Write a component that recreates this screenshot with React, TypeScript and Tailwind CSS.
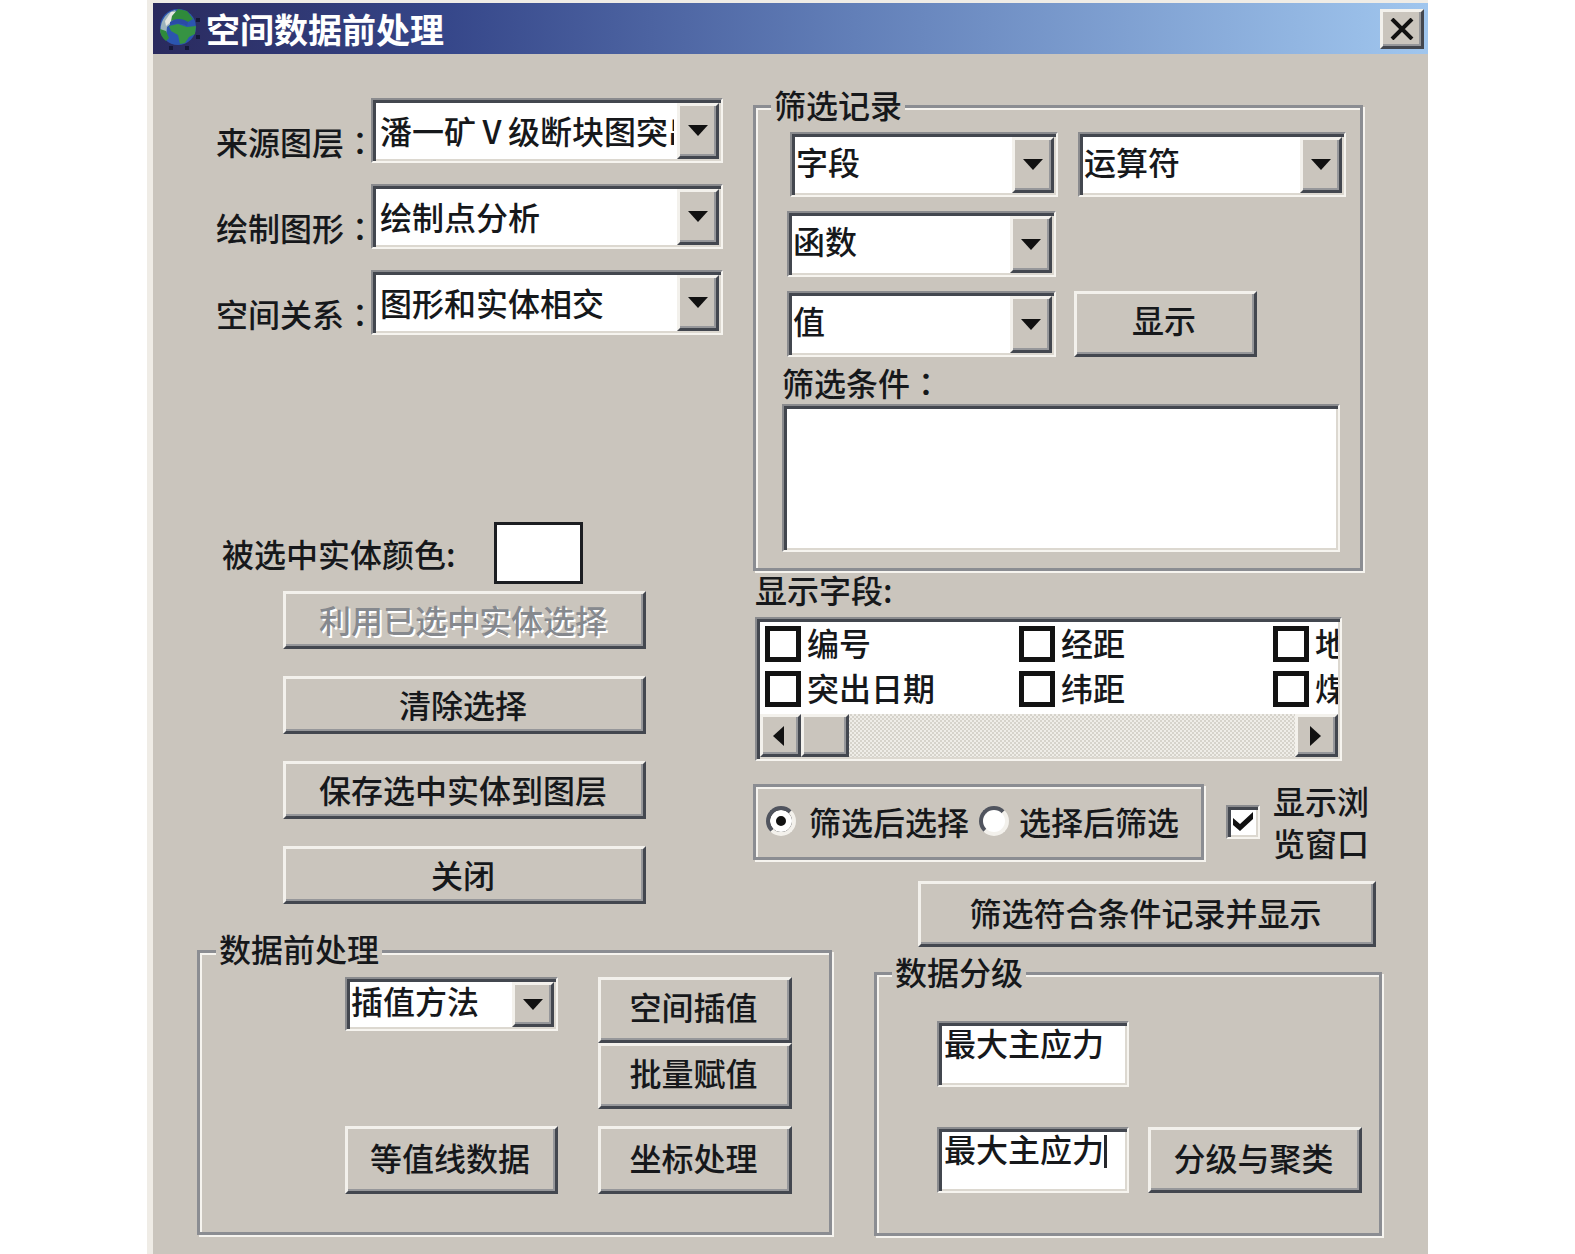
import React from "react";

const sunken =
  "border-2 border-t-[#8a8b8e] border-l-[#8a8b8e] border-r-[#f6f4ef] border-b-[#f6f4ef] shadow-[inset_3px_3px_0_#43474f,inset_-2px_-2px_0_#dcd8d0]";

const raised =
  "border-[3px] border-t-[#f3f1ec] border-l-[#f3f1ec] border-r-[#43474f] border-b-[#43474f] bg-[#cac5bd] shadow-[inset_-2px_-2px_0_#96979a]";

const etched =
  "border-[3px] border-[#8b8d92] shadow-[inset_2px_2px_0_#f6f4ef,2px_2px_0_#f6f4ef]";

type ButtonProps = {
  children?: React.ReactNode;
  className?: string;
  disabled?: boolean;
  label?: string;
};

const Button = ({ children, className = "", disabled, label }: ButtonProps) => (
  <button
    type="button"
    disabled={disabled}
    aria-label={label}
    className={`${raised} flex items-center justify-center pr-[3px] whitespace-nowrap disabled:text-[#86898e] disabled:[text-shadow:2px_2px_0_#fff] ${className}`}
  >
    {children}
  </button>
);

const Arrow = ({ d }: { d: string }) => (
  <svg width="20" height="20" viewBox="0 0 20 20" fill="#111" aria-hidden="true">
    <path d={d} />
  </svg>
);

type ComboProps = {
  id: string;
  value: string;
  label?: string;
  className?: string;
  inset?: string;
};

const Combo = ({ id, value, label, className = "", inset = "pl-px pb-[8px]" }: ComboProps) => (
  <div className={`${sunken} flex shrink-0 bg-white ${className}`}>
    <select
      id={id}
      aria-label={label}
      className={`mr-[3px] ml-[3px] min-w-0 flex-1 appearance-none overflow-hidden bg-transparent leading-[40px] outline-none ${inset}`}
    >
      <option>{value}</option>
    </select>
    <span
      className={`${raised} mt-[3px] mr-[2px] mb-[2px] flex w-[42px] shrink-0 items-center justify-center`}
    >
      <Arrow d="M0 4h20L10 15z" />
    </span>
  </div>
);

const WideColon = () => <span className="font-['Noto_Sans_CJK_TC']">：</span>;

const sources = [
  { id: "layer", label: "来源图层", value: "潘一矿Ⅴ级断块图突出" },
  { id: "shape", label: "绘制图形", value: "绘制点分析" },
  { id: "relation", label: "空间关系", value: "图形和实体相交" },
];

const fields = [
  ["编号", "经距", "地"],
  ["突出日期", "纬距", "煤"],
];

const Globe = () => (
  <svg width="42" height="42" viewBox="0 0 42 42" aria-hidden="true">
    <circle cx="20" cy="19" r="18" fill="#2b55b0" />
    <path d="M3 26C1 16 6 5 17 2l3 4-5 8-6 5-1 9z" fill="#9db3bd" />
    <path d="M7 13l6-9 5 0-4 9-6 5z" fill="#e4e6e0" />
    <path d="M14 8l6-7 9 2 6 8-5 3-9-3-8 2z" fill="#2f8a3b" />
    <path d="M11 18l9-2 9 3 9-1-1 8-6 3-4 6-5 1-2-9-7-4z" fill="#369343" />
    <path d="M2 21l6 2 3 7-3 3c-4-3-6-7-6-12z" fill="#2f8a3b" />
    <path d="M12 14c5-4 13-4 18 0l-1 4c-5-3-11-3-17-1z" fill="#2b4ba6" />
    <path d="M38 10h4v4h-4zM38 27h4v4h-4zM11 38h4v4h-4zM27 38h4v4h-4z" fill="#15183a" />
  </svg>
);

const TitleBar = () => (
  <header className="flex h-[51px] items-center bg-[linear-gradient(to_right,#2a2a5e,#36478a_23%,#627fb8_55%,#a0c6ee)] pr-1 pl-[5px]">
    <Globe />
    <h1 className="ml-[6px] flex-1 text-[34px] font-bold text-white">空间数据前处理</h1>
    <button
      type="button"
      aria-label="关闭窗口"
      className={`${raised} flex h-[40px] w-[44px] items-center justify-center`}
    >
      <svg width="24" height="22" viewBox="0 0 24 22" stroke="#111" strokeWidth="4" aria-hidden="true">
        <path d="M2 1l20 20M22 1L2 21" />
      </svg>
    </button>
  </header>
);

const Selection = () => (
  <>
    <div className="flex flex-col gap-[21px] pr-[30px] pl-[63px]">
      {sources.map((s) => (
        <div key={s.id} className="flex">
          <label htmlFor={s.id} className="w-[155px] shrink-0 pt-[27px] whitespace-nowrap">
            {s.label}
            <WideColon />
          </label>
          <Combo
            id={s.id}
            value={s.value}
            inset="pl-1 pb-px"
            className="h-[65px] min-w-0 flex-1"
          />
        </div>
      ))}
    </div>

    <div className="mt-[187px] flex items-center pl-[69px]">
      <label htmlFor="color" className="w-[272px]">
        被选中实体颜色:
      </label>
      <button
        type="button"
        id="color"
        className="h-[62px] w-[89px] border-[3px] border-[#1c1e22] bg-white"
      />
    </div>

    <div className="mt-[7px] flex flex-col gap-[27px] pr-[107px] pl-[130px]">
      <Button disabled className="h-[58px] pb-[3px]">
        利用已选中实体选择
      </Button>
      <Button className="h-[58px] pb-[3px]">清除选择</Button>
      <Button className="h-[58px] pb-[3px]">保存选中实体到图层</Button>
      <Button className="h-[58px] pb-[3px]">关闭</Button>
    </div>
  </>
);

const Preprocess = () => (
  <fieldset className={`${etched} mt-[28px] -mr-[79px] ml-[44px] h-[303px] pr-[37px] pl-[145px]`}>
    <legend className="-ml-[129px] bg-[#cac5bd] px-[3px] pb-[6px]">数据前处理</legend>
    <div className="mt-[7px] flex justify-between">
      <div className="flex w-[213px] flex-col justify-between">
        <Combo id="method" label="插值方法" value="插值方法" className="h-[54px]" />
        <Button className="h-[68px] pb-[7px]">等值线数据</Button>
      </div>
      <div className="flex w-[194px] flex-col">
        <Button className="h-[66px] pb-[8px]">空间插值</Button>
        <Button className="h-[66px] pb-[8px]">批量赋值</Button>
        <Button className="mt-[17px] h-[68px] pb-[7px]">坐标处理</Button>
      </div>
    </div>
  </fieldset>
);

const Filter = () => (
  <fieldset className={`${etched} mr-[65px] h-[483px] pr-[14px] pl-[26px]`}>
    <legend className="-ml-[11px] bg-[#cac5bd] px-[3px] pb-1">筛选记录</legend>
    <div className="mt-[8px] ml-[8px] flex justify-between">
      <Combo id="field" label="字段" value="字段" className="h-[65px] w-[268px]" />
      <Combo id="operator" label="运算符" value="运算符" className="h-[65px] w-[268px]" />
    </div>
    <div className="mt-[14px] ml-[5px]">
      <Combo id="fn" label="函数" value="函数" className="h-[66px] w-[269px]" />
    </div>
    <div className="mt-[14px] ml-[5px] flex gap-[18px]">
      <Combo id="value" label="值" value="值" className="h-[66px] w-[269px]" />
      <Button className="h-[66px] w-[183px] pb-[10px]">显示</Button>
    </div>
    <div className="mt-[9px] mr-[6px]">
      <label htmlFor="condition" className="block">
        筛选条件
        <WideColon />
      </label>
      <textarea
        id="condition"
        className={`${sunken} mt-[6px] block h-[148px] w-full resize-none bg-white outline-none`}
      />
    </div>
  </fieldset>
);

const FieldList = () => (
  <section className="mt-[2px]">
    <h2 className="pl-[2px]">显示字段:</h2>
    <div className={`${sunken} mt-[12px] mr-[86px] ml-[2px] bg-white`}>
      <div className="-mt-[2px] mr-[2px] ml-[3px] h-[97px] overflow-x-clip pt-[9px] pl-[5px]">
        {fields.map((row) => (
          <div key={row[0]} className="flex h-[45px]">
            {row.map((name) => (
              <label key={name} className="flex w-[254px] shrink-0 items-start gap-[6px]">
                <input
                  type="checkbox"
                  className="size-[36px] shrink-0 appearance-none border-[5px] border-[#131313] bg-white"
                />
                {name}
              </label>
            ))}
          </div>
        ))}
      </div>
      <div className="mr-[2px] mb-[2px] ml-[3px] flex h-[43px] bg-[repeating-conic-gradient(#d6d3cb_0_25%,#efede8_0_50%)] bg-size-[4px_4px]">
        <Button label="向左滚动" className="w-[41px]">
          <Arrow d="M15 0v20L4 10z" />
        </Button>
        <Button label="滚动条" className="w-[48px]" />
        <Button label="向右滚动" className="ml-auto w-[43px]">
          <Arrow d="M5 0v20L16 10z" />
        </Button>
      </div>
    </div>
  </section>
);

const radio =
  "size-[30px] shrink-0 appearance-none rounded-full border-[4px] border-t-[#50545e] border-l-[#50545e] border-r-[#f3f1ec] border-b-[#f3f1ec] bg-white checked:bg-[#111] checked:shadow-[inset_0_0_0_6px_#fff]";

const Order = () => (
  <div className="mt-[18px] flex items-center">
    <div
      className={`${etched} flex h-[76px] w-[451px] items-center pb-px pl-[10px] whitespace-nowrap`}
    >
      <label className="flex items-center gap-[13px]">
        <input type="radio" name="order" defaultChecked className={radio} />
        筛选后选择
      </label>
      <label className="ml-[10px] flex items-center gap-[10px]">
        <input type="radio" name="order" className={radio} />
        选择后筛选
      </label>
    </div>
    <label className="ml-[22px] flex items-center gap-[13px] leading-[42px]">
      <span className="grid">
        <input
          type="checkbox"
          defaultChecked
          className={`${sunken} col-start-1 row-start-1 size-[34px] appearance-none bg-white`}
        />
        <svg
          className="pointer-events-none col-start-1 row-start-1 place-self-center"
          width="22"
          height="20"
          viewBox="0 0 22 20"
          fill="#111"
          aria-hidden="true"
        >
          <path d="M1 6l7 6L21 0v7L8 19 1 13z" />
        </svg>
      </span>
      <span className="pb-px">
        显示浏
        <br />
        览窗口
      </span>
    </label>
  </div>
);

const entry = `${sunken} block h-[66px] w-[192px] resize-none overflow-hidden bg-white pt-[3px] pl-[5px] whitespace-nowrap outline-none`;

const Grading = () => (
  <fieldset className={`${etched} mt-[8px] mr-[46px] ml-[121px] h-[281px] pr-[17px] pl-[60px]`}>
    <legend className="-ml-[45px] bg-[#cac5bd] px-[3px] pb-1">数据分级</legend>
    <div className="mt-[30px]">
      <textarea aria-label="分级字段" rows={1} defaultValue="最大主应力" className={entry} />
    </div>
    <div className="mt-[40px] flex justify-between">
      <div className="relative">
        <textarea aria-label="聚类字段" rows={1} defaultValue="最大主应力" className={entry} />
        <span className="absolute top-[8px] left-[167px] h-[33px] w-[3px] bg-[#26282c]" />
      </div>
      <Button className="h-[66px] w-[214px] pb-[7px]">分级与聚类</Button>
    </div>
  </fieldset>
);

const App = () => {
  return (
    <div className="min-h-screen bg-white px-[147px] font-['Noto_Sans_CJK_SC',sans-serif] text-[32px] leading-[32px] font-medium text-[#16181b]">
      <main className="min-h-screen border-t-[3px] border-l-[6px] border-[#efece6] bg-[#cac5bd]">
        <TitleBar />
        <div className="grid grid-cols-[600fr_675fr] pb-[14px]">
          <div className="min-w-0 pt-[44px]">
            <Selection />
            <Preprocess />
          </div>
          <div className="min-w-0 pt-[34px]">
            <Filter />
            <FieldList />
            <Order />
            <Button className="mt-[17px] ml-[165px] h-[66px] w-[458px] pb-[5px]">
              筛选符合条件记录并显示
            </Button>
            <Grading />
          </div>
        </div>
      </main>
    </div>
  );
};

export default App;
